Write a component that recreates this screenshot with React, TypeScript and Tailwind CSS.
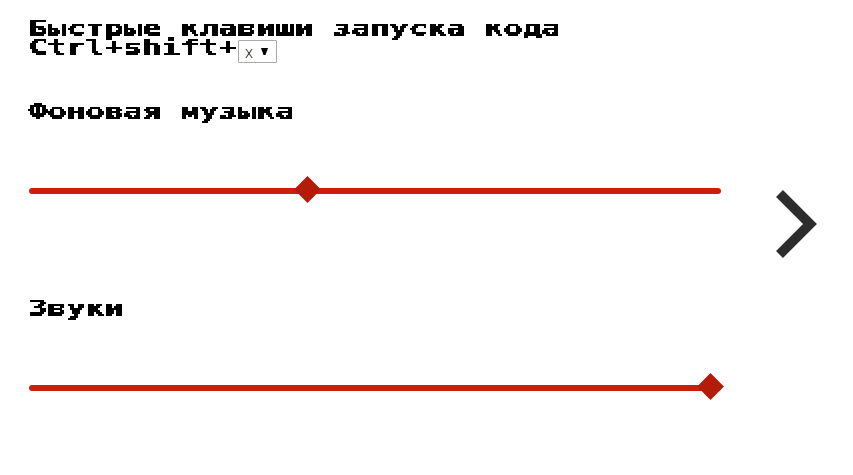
import type { ReactNode } from 'react';

function PixelText({ children }: { children: ReactNode }) {
  return (
    <div className="h-[19px] w-max min-w-full [filter:url(#pixelate)]">
      <span className="block h-[19px] w-max origin-left scale-x-[1.4347] whitespace-pre font-['DejaVu_Sans_Mono','Liberation_Mono',monospace] text-[22px] leading-[19px] font-bold text-black [-webkit-text-stroke:0.4px_black]">
        {children}
      </span>
    </div>
  );
}

function Slider({ value }: { value: number }) {
  return (
    <div className="ml-[1px] flex h-[28px] w-[692px] items-center">
      <div className="relative h-[6px] w-full rounded-full bg-[#c9200b]">
        <div
          className="absolute top-[-8px] size-[19px] rotate-45 bg-[#b51b09]"
          style={{ left: `${value}px` }}
        />
      </div>
    </div>
  );
}

export default function App() {
  return (
    <main className="flex h-[475px] w-[853px] overflow-hidden bg-white">
      <svg className="absolute size-0" aria-hidden="true">
        <filter
          id="pixelate"
          filterUnits="userSpaceOnUse"
          primitiveUnits="userSpaceOnUse"
          x="-4"
          y="-4"
          width="720"
          height="30"
        >
          {/* Keep one sample per 2x2 cell, then spread it over the cell */}
          <feFlood x="0" y="0" width="1" height="1" floodColor="#000" result="cell" />
          <feOffset in="cell" x="0" y="0" width="2" height="2" dx="0" dy="0" result="cell2" />
          <feTile in="cell2" result="grid" />
          <feComposite in="SourceGraphic" in2="grid" operator="in" result="samples" />
          <feOffset in="samples" dx="1" dy="0" result="right" />
          <feMerge result="row">
            <feMergeNode in="samples" />
            <feMergeNode in="right" />
          </feMerge>
          <feOffset in="row" dx="0" dy="-1" result="above" />
          <feMerge>
            <feMergeNode in="row" />
            <feMergeNode in="above" />
          </feMerge>
          <feComponentTransfer>
            <feFuncA type="discrete" tableValues="0 1" />
          </feComponentTransfer>
        </filter>
      </svg>
      <section className="flex w-[747px] flex-col pl-[28px] pt-[19px]">
        <PixelText>Быстрые клавиши запуска кода</PixelText>
        <div className="flex h-[25px] items-start">
          <div className="w-[210px]">
            <PixelText>Ctrl+shift+</PixelText>
          </div>
          <button className="mt-[2px] flex h-[23px] w-[39px] items-center rounded-[1px] border border-[#a9a9a9] bg-white pl-[6px] text-black">
            <span className="w-[8px] font-['Open_Sans','Liberation_Sans',sans-serif] text-[16px] leading-[20px] font-light">x</span>
            <svg className="mb-[1px] ml-[8px] h-[7px] w-[8px]" viewBox="0 0 8 7">
              <path d="M0 0H7L4.5 7H2.5Z" fill="#000" />
            </svg>
          </button>
        </div>
        <div className="mt-[39px]">
          <PixelText>Фоновая музыка</PixelText>
        </div>
        <div className="mt-[56px]">
          <Slider value={269} />
        </div>
        <div className="mt-[94px]">
          <PixelText>Звуки</PixelText>
        </div>
        <div className="mt-[56px]">
          <Slider value={672} />
        </div>
      </section>
      <button className="ml-[29px] mt-[190px] h-[68px] w-[41px]" aria-label="Вперёд">
        <svg className="block h-[68px] w-[41px]" viewBox="0 0 41 68">
          <path d="M3.5 3.5L34 34L3.5 64.5" fill="none" stroke="#2c2c2c" strokeWidth="9.8" />
        </svg>
      </button>
    </main>
  );
}
